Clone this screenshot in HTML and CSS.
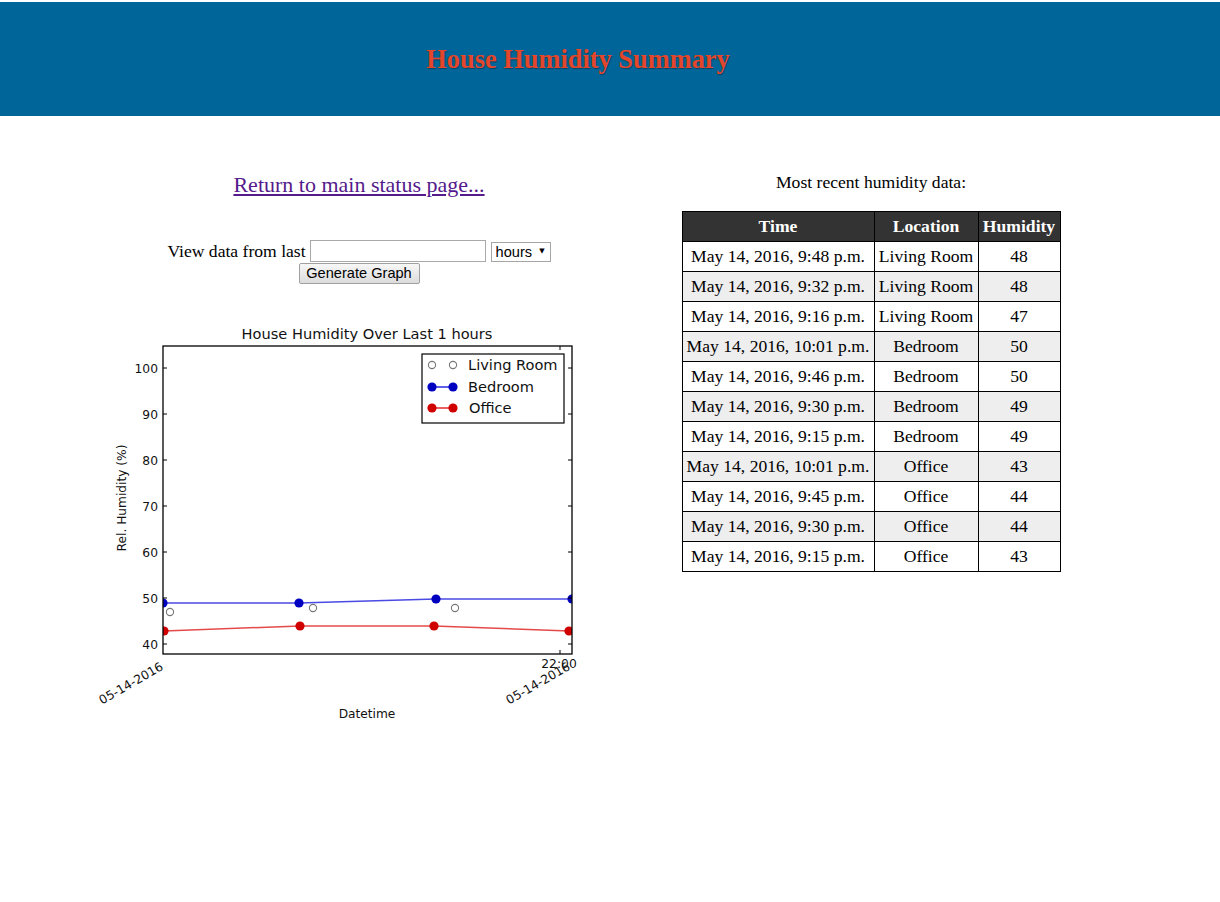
FILE: index.html
```html
<!DOCTYPE html>
<html lang="en">
<head>
<meta charset="utf-8">
<title>House Humidity Summary</title>
<link rel="stylesheet" href="styles.css">
</head>
<body>
<header class="banner">
  <h1 class="banner-title">House Humidity Summary</h1>
</header>
<main class="content">
  <section class="col col-left">
    <p class="return"><a class="return-link" href="#">Return to main status page...</a></p>
    <form class="range">
      <div class="range-row">
        <span class="range-label">View data from last</span>
        <input class="range-input" type="text">
        <span class="select-wrap"><select class="range-select"><option>hours</option></select></span>
      </div>
      <button class="range-button" type="button">Generate Graph</button>
    </form>
    <svg class="chart" width="512" height="420" viewBox="103 318 512 420" xmlns="http://www.w3.org/2000/svg">
      <defs>
        <clipPath id="plot"><rect x="163" y="346" width="409" height="308"/></clipPath>
      </defs>
      <text class="chart-title" x="367" y="339" text-anchor="middle">House Humidity Over Last 1 hours</text>
      <g clip-path="url(#plot)">
        <polyline points="163,603 299,603 436,599 572,599" fill="none" stroke="#2a2ae0" stroke-opacity="0.85" stroke-width="1.5"/>
        <polyline points="164,631 300,626 434,626 569,631" fill="none" stroke="#e02a2a" stroke-opacity="0.85" stroke-width="1.5"/>
        <g fill="#0000c0">
          <circle cx="163" cy="603" r="4.6"/>
          <circle cx="299" cy="603" r="4.6"/>
          <circle cx="436" cy="599" r="4.6"/>
          <circle cx="572" cy="599" r="4.6"/>
        </g>
        <g fill="#d00000">
          <circle cx="164" cy="631" r="4.6"/>
          <circle cx="300" cy="626" r="4.6"/>
          <circle cx="434" cy="626" r="4.6"/>
          <circle cx="569" cy="631" r="4.6"/>
        </g>
        <g fill="#fff" stroke="#777" stroke-width="1.1">
          <circle cx="170" cy="612" r="3.6"/>
          <circle cx="313" cy="608" r="3.6"/>
          <circle cx="455" cy="608" r="3.6"/>
        </g>
      </g>
      <rect x="163" y="346" width="409" height="308" fill="none" stroke="#000" stroke-width="1.3"/>
      <g stroke="#000" stroke-width="1">
        <path d="M163 644h4M163 598h4M163 552h4M163 506h4M163 460h4M163 414h4M163 368h4"/>
        <path d="M572 644h-4M572 598h-4M572 552h-4M572 506h-4M572 460h-4M572 414h-4M572 368h-4"/>
        <path d="M560 654v-4M560 346v4"/>
      </g>
      <g class="tick-label" text-anchor="end">
        <text x="158" y="648.5">40</text>
        <text x="158" y="602.5">50</text>
        <text x="158" y="556.5">60</text>
        <text x="158" y="510.5">70</text>
        <text x="158" y="464.5">80</text>
        <text x="158" y="418.5">90</text>
        <text x="158" y="372.5">100</text>
      </g>
      <g class="tick-label">
        <text x="164" y="669" text-anchor="end" transform="rotate(-30 164 669)">05-14-2016</text>
        <text x="571" y="669" text-anchor="end" transform="rotate(-30 571 669)">05-14-2016</text>
        <text x="559" y="668" text-anchor="middle">22:00</text>
      </g>
      <text class="axis-label" x="367" y="718" text-anchor="middle">Datetime</text>
      <text class="axis-label" x="126" y="498" text-anchor="middle" transform="rotate(-90 126 498)">Rel. Humidity (%)</text>
      <rect x="422" y="354" width="142" height="69" fill="#fff" stroke="#000" stroke-width="1.2"/>
      <g fill="#fff" stroke="#777" stroke-width="1.1">
        <circle cx="432" cy="365" r="3.6"/>
        <circle cx="453" cy="365" r="3.6"/>
      </g>
      <path d="M432 387H453" stroke="#2a2ae0" stroke-width="1.5"/>
      <circle cx="432" cy="387" r="4.6" fill="#0000c0"/>
      <circle cx="453" cy="387" r="4.6" fill="#0000c0"/>
      <path d="M432 408H453" stroke="#e02a2a" stroke-width="1.5"/>
      <circle cx="432" cy="408" r="4.6" fill="#d00000"/>
      <circle cx="453" cy="408" r="4.6" fill="#d00000"/>
      <g class="legend-label">
        <text x="468" y="370">Living Room</text>
        <text x="468" y="392">Bedroom</text>
        <text x="469" y="413">Office</text>
      </g>
    </svg>
  </section>
  <section class="col col-right">
    <p class="caption">Most recent humidity data:</p>
    <table class="data">
      <colgroup><col class="c-time"><col class="c-loc"><col class="c-hum"></colgroup>
      <thead>
        <tr><th>Time</th><th>Location</th><th>Humidity</th></tr>
      </thead>
      <tbody>
        <tr><td>May 14, 2016, 9:48 p.m.</td><td>Living Room</td><td>48</td></tr>
        <tr><td>May 14, 2016, 9:32 p.m.</td><td>Living Room</td><td>48</td></tr>
        <tr><td>May 14, 2016, 9:16 p.m.</td><td>Living Room</td><td>47</td></tr>
        <tr><td>May 14, 2016, 10:01 p.m.</td><td>Bedroom</td><td>50</td></tr>
        <tr><td>May 14, 2016, 9:46 p.m.</td><td>Bedroom</td><td>50</td></tr>
        <tr><td>May 14, 2016, 9:30 p.m.</td><td>Bedroom</td><td>49</td></tr>
        <tr><td>May 14, 2016, 9:15 p.m.</td><td>Bedroom</td><td>49</td></tr>
        <tr><td>May 14, 2016, 10:01 p.m.</td><td>Office</td><td>43</td></tr>
        <tr><td>May 14, 2016, 9:45 p.m.</td><td>Office</td><td>44</td></tr>
        <tr><td>May 14, 2016, 9:30 p.m.</td><td>Office</td><td>44</td></tr>
        <tr><td>May 14, 2016, 9:15 p.m.</td><td>Office</td><td>43</td></tr>
      </tbody>
    </table>
  </section>
</main>
</body>
</html>
```
FILE: styles.css
```css
html, body {
  margin: 0;
  padding: 0;
  background: #fff;
}

body {
  font-family: "Liberation Serif", "Times New Roman", serif;
  font-size: 17.6px;
  color: #000;
}

.banner {
  margin-top: 2px;
  height: 114px;
  background: #006699;
  display: flex;
  align-items: center;
  justify-content: center;
  padding-right: 64px;
}

.banner-title {
  margin: 0;
  font-size: 26.4px;
  line-height: 30px;
  font-weight: bold;
  color: #e4462c;
  text-shadow: 1px 1px 1px rgba(0, 0, 0, 0.35);
}

.content {
  display: flex;
  padding-left: 103px;
}

.col {
  width: 512px;
  flex: none;
  text-align: center;
}

.return {
  margin: 56px 0 0;
  font-size: 22px;
  line-height: 26px;
}

.return-link {
  color: #551a8b;
}

.range {
  margin: 42px 0 0;
  display: flex;
  flex-direction: column;
  align-items: center;
}

.range-row {
  display: flex;
  align-items: center;
  height: 22px;
}

.range-label {
  line-height: 22px;
  margin-right: 4px;
}

.range-input {
  box-sizing: border-box;
  width: 176px;
  height: 22px;
  margin: 0 5px 0 0;
  padding: 0 2px;
  border: 1px solid #a9a9a9;
  background: #fff;
}

.select-wrap {
  position: relative;
  display: inline-block;
  height: 20px;
}

.select-wrap::after {
  content: "\25BC";
  position: absolute;
  right: 6px;
  top: 5px;
  font-family: "DejaVu Sans", sans-serif;
  font-size: 7px;
  line-height: 10px;
  color: #000;
  pointer-events: none;
}

.range-select {
  -webkit-appearance: none;
  appearance: none;
  box-sizing: border-box;
  width: 60px;
  height: 20px;
  margin: 0;
  padding: 0 0 0 4px;
  border: 1px solid #a6a6a6;
  border-radius: 0;
  background: #fff;
  font-family: "Liberation Sans", Arial, sans-serif;
  font-size: 14.6px;
  color: #000;
}

.range-button {
  box-sizing: border-box;
  width: 121px;
  height: 21px;
  margin: 1px 0 0;
  padding: 0;
  border: 1px solid #a0a0a0;
  border-radius: 2px;
  background: linear-gradient(#f7f7f7, #dcdcdc);
  font-family: "Liberation Sans", Arial, sans-serif;
  font-size: 14.6px;
  line-height: 19px;
  color: #000;
}

.chart {
  display: block;
  margin: 34px 0 0;
  overflow: visible;
  font-family: "DejaVu Sans", sans-serif;
}

.chart-title {
  font-size: 14.6px;
  fill: #111;
}

.tick-label {
  font-size: 12.3px;
  fill: #111;
}

.axis-label {
  font-size: 12.2px;
  fill: #111;
}

.legend-label {
  font-size: 14.6px;
  fill: #111;
}

.caption {
  margin: 56px 0 0;
  line-height: 20px;
}

.data {
  margin: 19px auto 0;
  border-collapse: collapse;
  table-layout: fixed;
  width: 378px;
}

.c-time { width: 192px; }
.c-loc { width: 104px; }
.c-hum { width: 82px; }

.data th,
.data td {
  border: 1px solid #000;
  padding: 0 1px;
  line-height: 29px;
  text-align: center;
  white-space: nowrap;
}

.data th {
  background: #333;
  color: #fff;
  font-weight: bold;
  border-color: #000;
}

.data tbody tr:nth-child(even) {
  background: #eee;
}
```
